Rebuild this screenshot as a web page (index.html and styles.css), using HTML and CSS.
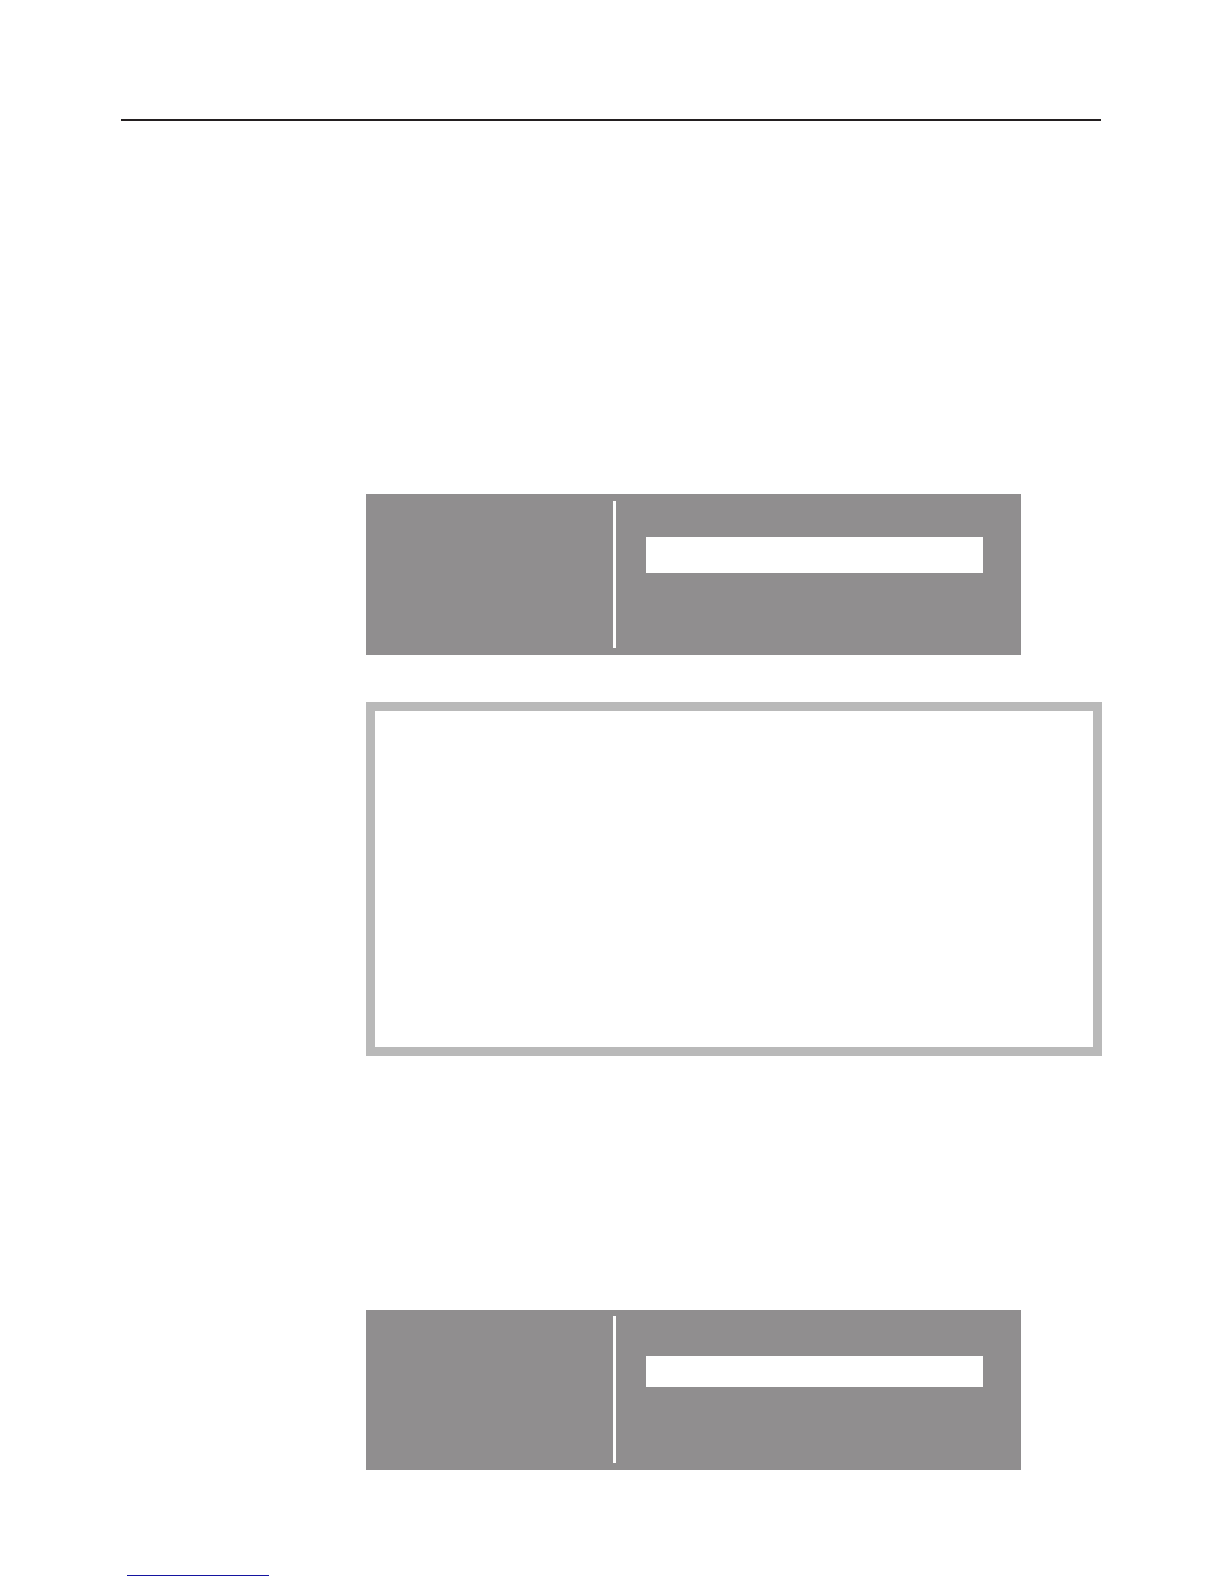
FILE: index.html
```html
<!DOCTYPE html>
<html lang="en">
<head>
  <meta charset="UTF-8">
  <title>Manual page</title>
  <link rel="stylesheet" href="styles.css">
</head>
<body>
  <hr class="rule">

  <main class="content">
    <section class="display">
      <div class="display-label"></div>
      <div class="display-menu">
        <div class="selected"></div>
      </div>
    </section>

    <section class="note"></section>

    <section class="display display-low">
      <div class="display-label"></div>
      <div class="display-menu">
        <div class="selected"></div>
      </div>
    </section>
  </main>

  <footer class="footer">
    <a class="footer-link" href="#"></a>
  </footer>
</body>
</html>
```
FILE: styles.css
```css
* {
  box-sizing: border-box;
}

body {
  margin: 0;
  padding: 119px 122px 8px 121px;
  background: #fff;
  font-family: "Liberation Sans", Arial, sans-serif;
}

.rule {
  height: 2px;
  margin: 0 1px 0 0;
  border: none;
  background: #231f20;
}

.content {
  padding: 373px 0 0 245px;
}

/* grey display panels */
.display {
  display: grid;
  grid-template-columns: 240px 1fr;
  min-height: 161px;
  margin-right: 81px;
  padding: 7px;
  background: #908e8f;
}

.display-menu {
  padding: 36px 31px 0 30px;
  border-left: 3px solid #fff;
}

.selected {
  height: 36px;
  background: #fff;
}

.display-low {
  min-height: 160px;
  padding-top: 6px;
}

.display-low .display-menu {
  padding-top: 40px;
}

.display-low .selected {
  height: 31px;
}

/* framed note box */
.note {
  min-height: 354px;
  margin: 47px 0 254px;
  border: 9px solid #b9b9b9;
}

.footer {
  padding: 105px 0 0 6px;
}

.footer-link {
  display: block;
  width: 142px;
  border-bottom: 1px solid #1414a0;
}
```
